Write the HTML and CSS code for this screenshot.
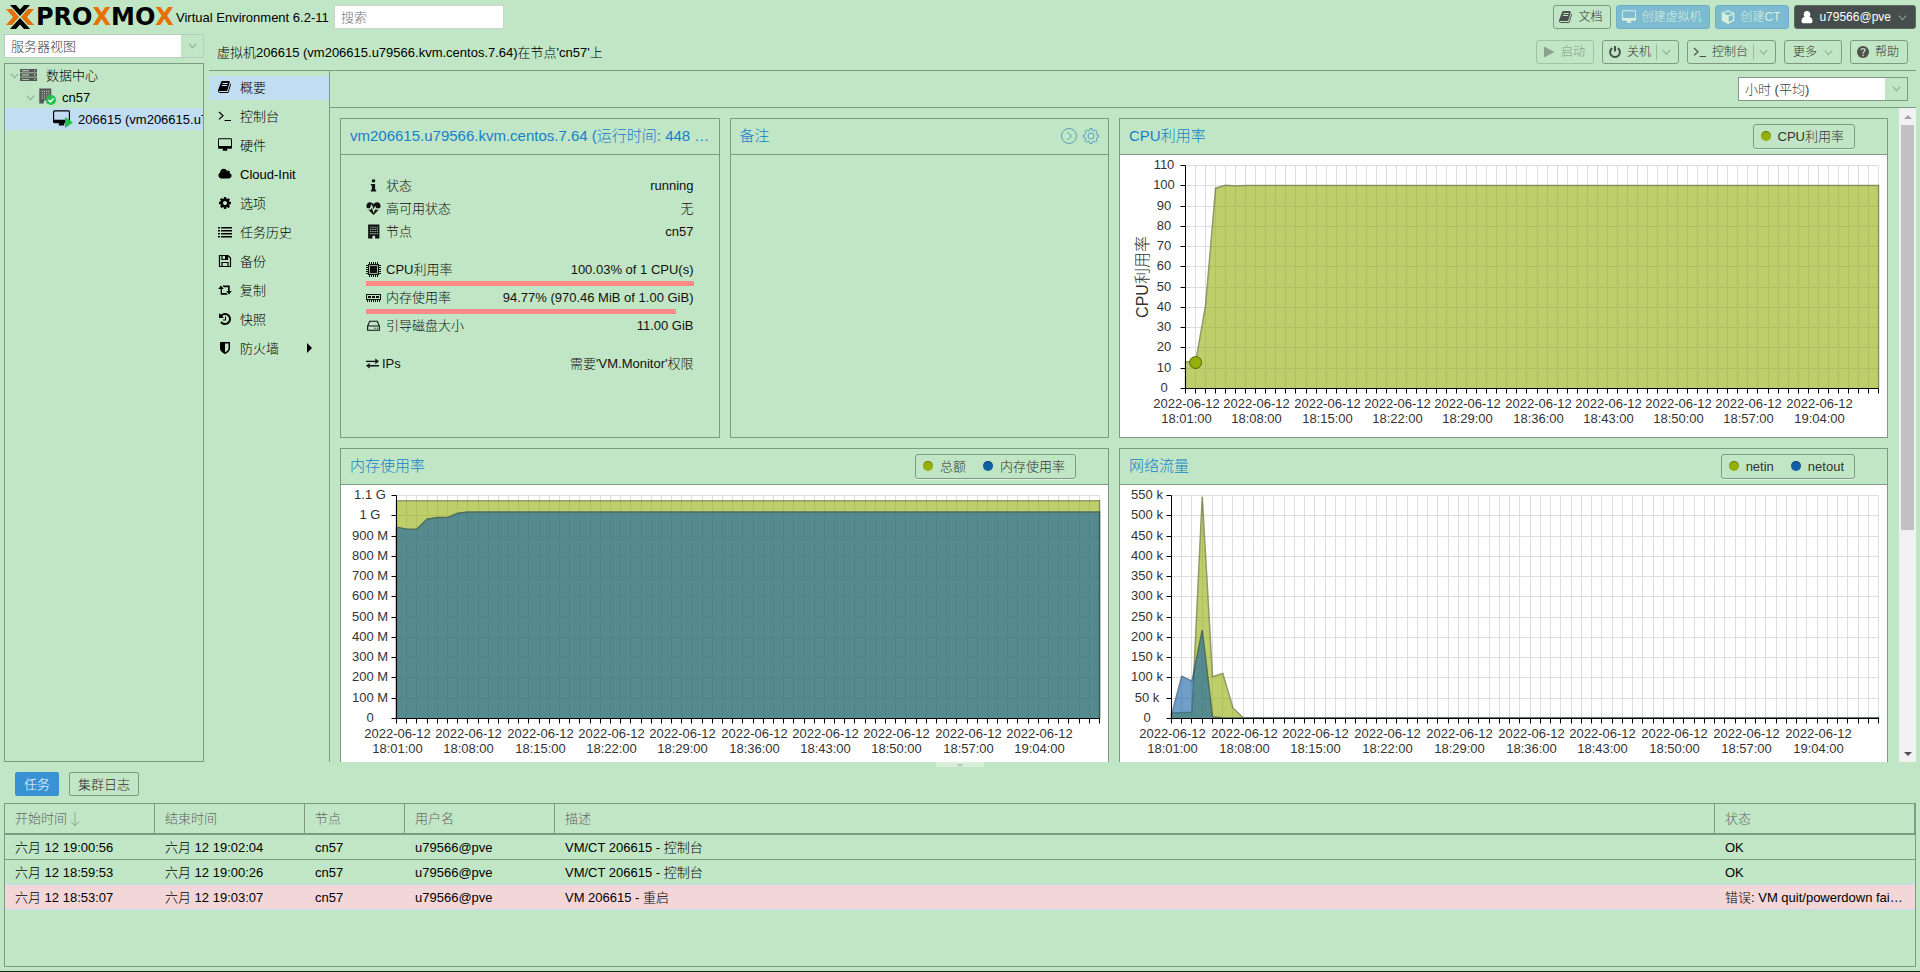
FILE: index.html
```html
<!DOCTYPE html>
<html lang="zh-CN">
<head>
  <meta charset="UTF-8">
  <meta name="viewport" content="width=device-width, initial-scale=1.0">
  <title>Proxmox Virtual Environment</title>
  <link rel="stylesheet" href="styles.css">
</head>
<body>
  <!-- Icon sprite -->
  <svg class="sprite" aria-hidden="true">
    <symbol id="i-book" viewBox="0 0 1792 1792"><path d="M1639 478q40 57 18 129l-275 906q-19 64-76.500 107.500t-122.500 43.500h-923q-77 0-148.500-53.500t-99.500-131.500q-24-67-2-127 0-4 3-27t4-37q1-8-3-21.500t-3-19.500q2-11 8-21t16.500-23.500 16.500-23.500q23-38 45-91.500t30-91.500q3-10 .5-30t-.5-28q3-11 17-28t17-23q21-36 42-92t25-90q1-9-2.500-32t.5-28q4-13 22-30.500t22-22.500q19-26 42.500-84.500t27.500-96.500q1-8-3-25.500t-2-26.500q2-8 9-18t18-23 17-21q8-12 16.500-30.500t15-35 16-36 19.500-32 26.500-23.500 36-11.500 47.500 5.500l-1 3q38-9 51-9h761q74 0 114 56t18 130l-274 906q-36 119-71.500 153.500t-128.500 34.500h-869q-27 0-38 15-11 16-1 43 24 70 144 70h923q29 0 56-15.500t35-41.500l300-987q7-22 5-57 38 15 59 43zm-1064 2q-4 13 2 22.500t20 9.500h608q13 0 25.500-9.500t16.500-22.500l21-64q4-13-2-22.500t-20-9.500h-608q-13 0-25.500 9.500t-16.500 22.500zm-83 256q-4 13 2 22.500t20 9.500h608q13 0 25.500-9.500t16.500-22.500l21-64q4-13-2-22.500t-20-9.500h-608q-13 0-25.500 9.500t-16.500 22.500z"/></symbol>
    <symbol id="i-desktop" viewBox="0 0 1856 1792"><path d="M1728 992v-832q0-13-9.500-22.500t-22.500-9.500h-1536q-13 0-22.500 9.500t-9.500 22.500v832q0 13 9.500 22.500t22.500 9.500h1536q13 0 22.500-9.500t9.500-22.500zm128-832v1088q0 66-47 113t-113 47h-512q0 37 16 77.500t32 71 16 43.500q0 26-19 45t-45 19h-512q-26 0-45-19t-19-45q0-14 16-44t32-70 16-78h-512q-66 0-113-47t-47-113v-1088q0-66 47-113t113-47h1536q66 0 113 47t47 113z"/></symbol>
    <symbol id="i-cube" viewBox="0 0 14 14"><path fill-rule="evenodd" d="M7 .3 13.300 2.800V10.700L7 13.900.7 10.700V2.800zM7 1.600 2.400 3.500 7 5.300 11.600 3.500zM7.700 12 12 9.800V4.800L7.700 6.500z"/></symbol>
    <symbol id="i-user" viewBox="0 0 14 14"><path d="M7 1c2 0 3.300 1.500 3.300 3.400 0 1-.4 2-1 2.700C11 7.200 12.500 8.600 12.500 11c0 1.500-.9 2.300-2.200 2.300H3.700C2.400 13.300 1.500 12.500 1.500 11c0-2.400 1.500-3.800 3.200-3.900-.6-.7-1-1.700-1-2.700C3.700 2.500 5 1 7 1z"/></symbol>
    <symbol id="i-play" viewBox="0 0 14 14"><path d="M2 1.500 12.500 7 2 12.500z"/></symbol>
    <symbol id="i-power" viewBox="0 0 14 14"><path class="line bold" d="M4.200 3.100a4.900 4.900 0 1 0 5.600 0M7 1v5.500"/></symbol>
    <symbol id="i-terminal" viewBox="0 0 14 14"><path class="line" d="M1 3l4 3.700-4 3.700M6.500 11.500H13"/></symbol>
    <symbol id="i-help" viewBox="0 0 14 14"><circle cx="7" cy="7" r="6"/><path class="hole" d="M5 5.300C5.200 3 9 3 9 5.300 9 6.800 7 6.600 7 8.400M7 9.600v1.600"/></symbol>
    <symbol id="i-cloud" viewBox="0 0 2048 1792"><path d="M1984 1152q0 159-112.500 271.500t-271.500 112.500h-1088q-185 0-316.500-131.500t-131.500-316.500q0-132 71-241.500t187-163.500q-2-28-2-43 0-212 150-362t362-150q158 0 286.500 88t187.500 230q70-62 166-62 106 0 181 75t75 181q0 75-41 138 129 30 213 134.500t84 239.500z"/></symbol>
    <symbol id="i-gear" viewBox="0 0 1792 1792"><path d="M1152 896q0-106-75-181t-181-75-181 75-75 181 75 181 181 75 181-75 75-181zm512-109v222q0 12-8 23t-20 13l-185 28q-19 54-39 91 35 50 107 138 10 12 10 25t-9 23q-27 37-99 108t-94 71q-12 0-26-9l-138-108q-44 23-91 38-16 136-29 186-7 28-36 28h-222q-14 0-24.500-8.500t-11.500-21.500l-28-184q-49-16-90-37l-141 107q-10 9-25 9-14 0-25-11-126-114-165-168-7-10-7-23 0-12 8-23 15-21 51-66.500t54-70.500q-27-50-41-99l-183-27q-13-2-21-12.500t-8-23.500v-222q0-12 8-23t19-13l186-28q14-46 39-92-40-57-107-138-10-12-10-24 0-10 9-23 26-36 98.500-107.500t94.500-71.500q13 0 26 10l138 107q44-23 91-38 16-136 29-186 7-28 36-28h222q14 0 24.500 8.500t11.500 21.500l28 184q49 16 90 37l142-107q9-9 24-9 13 0 25 10 129 119 165 170 7 8 7 22 0 12-8 23-15 21-51 66.500t-54 70.500q26 50 41 98l183 28q13 2 21 12.500t8 23.500z"/></symbol>
    <symbol id="i-list" viewBox="0 0 14 14"><path d="M0 2h2v1.500H0zM3 2h11v1.500H3zM0 5h2v1.500H0zM3 5h11v1.500H3zM0 8h2v1.500H0zM3 8h11v1.500H3zM0 11h2v1.500H0zM3 11h11v1.500H3z"/></symbol>
    <symbol id="i-floppy" viewBox="0 0 14 14"><path class="line" d="M1.500 1.500h8.500l2.500 2.500v8.500h-11zM4 1.500v4h5.500v-4M4 12.500v-4h6v4"/><path d="M7 2h2v3H7z"/></symbol>
    <symbol id="i-retweet" viewBox="0 0 14 14"><path d="M3 2.500 5.800 6H4v4h4.500l1.200 1.800H2.700V6H.2zM11 11.500 8.200 8H10V4.300H5.800L4.500 2.500h7.200V8h2.100z"/></symbol>
    <symbol id="i-history" viewBox="0 0 1792 1792"><path d="M1664 896q0 156-61 298t-164 245-245 164-298 61q-172 0-327-72.500t-264-204.500q-7-10-6.500-22.500t8.500-20.500l137-138q10-9 25-9 16 2 23 12 73 95 179 147t225 52q104 0 198.500-40.500t163.500-109.500 109.500-163.500 40.500-198.500-40.500-198.500-109.500-163.500-163.500-109.500-198.500-40.500q-98 0-188 35.500t-160 101.500l137 138q31 30 14 69-17 40-59 40h-448q-26 0-45-19t-19-45v-448q0-42 40-59 39-17 69 14l130 129q107-101 244.500-156.500t284.500-55.500q156 0 298 61t245 164 164 245 61 298zm-640-288v448q0 14-9 23t-23 9h-320q-14 0-23-9t-9-23v-64q0-14 9-23t23-9h224v-352q0-14 9-23t23-9h64q14 0 23 9t9 23z"/></symbol>
    <symbol id="i-shield" viewBox="0 0 1792 1792"><path d="M1344 960v-640h-448v1137q119-63 213-137 235-184 235-360zm192-768v768q0 86-33.500 170.500t-83 150-118 127.500-126.500 103-121 77.500-89.500 49.500-42.500 20q-12 6-26 6t-26-6q-16-7-42.500-20t-89.500-49.500-121-77.500-126.500-103-118-127.500-83-150-33.500-170.500v-768q0-26 19-45t45-19h1152q26 0 45 19t19 45z"/></symbol>
    <symbol id="i-info" viewBox="0 0 14 14"><path d="M5.500 1.500h3v2.500h-3zM4.500 5.500h4V11h1v1.500h-5V11h1V7h-1z"/></symbol>
    <symbol id="i-heart" viewBox="0 0 14 14"><path d="M7 13 1.500 7.500C-.8 4.800.8 1.200 3.700 1.200 5.500 1.200 6.400 2.200 7 3c.6-.8 1.500-1.800 3.300-1.800 2.900 0 4.500 3.600 2.200 6.300z"/><path class="hole" d="M0 7.500h4l1.200-3 2 5L8.500 6l.8 1.500H14"/></symbol>
    <symbol id="i-building" viewBox="0 0 14 14"><path fill-rule="evenodd" d="M2 .5h10.500v13H8.500v-2.500H6v2.500H2zM4 2.500v1h1v-1zM6 2.500v1h1v-1zM8 2.500v1h1v-1zM10 2.500v1h1v-1zM4 4.500v1h1v-1zM6 4.500v1h1v-1zM8 4.500v1h1v-1zM10 4.500v1h1v-1zM4 6.500v1h1v-1zM6 6.500v1h1v-1zM8 6.500v1h1v-1zM10 6.500v1h1v-1zM4 8.500v1h1v-1zM6 8.500v1h1v-1zM8 8.500v1h1v-1zM10 8.500v1h1v-1z"/></symbol>
    <symbol id="i-server" viewBox="0 0 17 14"><path fill-rule="evenodd" d="M0 1h17v3.500H0zM0 5.300h17v3.500H0zM0 9.600h17v3.500H0zM2 2.300v.9h7v-.9zM14 2.300v.9h1.500v-.9zM2 6.600v.9h7v-.9zM14 6.600v.9h1.500v-.9zM2 10.900v.9h7v-.9zM14 10.900v.9h1.500v-.9z"/></symbol>
    <symbol id="i-cpu" viewBox="0 0 15 15"><path fill-rule="evenodd" d="M2 2h11v11H2zM3.200 3.200v8.600h8.600V3.200z"/><path d="M4 4h7v7H4zM3 0h1v2H3zM5 0h1v2H5zM7 0h1v2H7zM9 0h1v2H9zM11 0h1v2h-1zM3 13h1v2H3zM5 13h1v2H5zM7 13h1v2H7zM9 13h1v2H9zM11 13h1v2h-1zM0 3h2v1H0zM0 5h2v1H0zM0 7h2v1H0zM0 9h2v1H0zM0 11h2v1H0zM13 3h2v1h-2zM13 5h2v1h-2zM13 7h2v1h-2zM13 9h2v1h-2zM13 11h2v1h-2z"/></symbol>
    <symbol id="i-memory" viewBox="0 0 15 15"><path fill-rule="evenodd" d="M0 4h15v6H0zM1 5v4h13V5z"/><path d="M2 6h3v2H2zM6 6h3v2H6zM10 6h3v2h-3zM1 10h1v2H1zM3 10h1v2H3zM5 10h1v2H5zM7 10h1v2H7zM9 10h1v2H9zM11 10h1v2h-1zM13 10h1v2h-1z"/></symbol>
    <symbol id="i-hdd" viewBox="0 0 14 14"><path class="line thin" d="M1.500 7.500 3.500 3h7l2 4.500v4h-11zM1.500 7.500h11M8 9.500h1M10 9.500h1"/></symbol>
    <symbol id="i-exchange" viewBox="0 0 14 14"><path d="M0 4h10V1.500L14 4.700l-4 3V5.400H0zM14 8.700H4V6.400L0 9.500l4 3v-2.400h10z"/></symbol>
    <symbol id="i-chevron" viewBox="0 0 10 10"><path class="line" d="M1 3l4 4.500L9 3"/></symbol>
  </svg>

  <!-- Header -->
  <header class="topbar">
    <div class="logo">
      <svg class="logo-mark" viewBox="0 0 30 26" aria-hidden="true">
        <path class="logo-orange" d="M1 5h6l7 8-7 8H1l7-8zM29 5h-6l-7 8 7 8h6l-7-8z"/>
        <path d="M5 1h6l4 4.500L19 1h6L15 12zM5 25h6l4-4.500 4 4.500h6L15 14z"/>
      </svg>
      <span class="logo-text">PRO<b>X</b>MO<b>X</b></span>
    </div>
    <span class="version">Virtual Environment 6.2-11</span>
    <input class="search" type="text" placeholder="搜索" aria-label="搜索">
    <div class="buttons">
      <button class="btn"><svg class="icon"><use href="#i-book"/></svg>文档</button>
      <button class="btn btn-create" disabled><svg class="icon"><use href="#i-desktop"/></svg>创建虚拟机</button>
      <button class="btn btn-create" disabled><svg class="icon"><use href="#i-cube"/></svg>创建CT</button>
      <button class="btn btn-user"><svg class="icon"><use href="#i-user"/></svg>u79566@pve<svg class="chevron"><use href="#i-chevron"/></svg></button>
    </div>
  </header>

  <main class="workspace">
    <!-- Resource tree -->
    <aside class="sidebar">
      <div class="combo view-combo">
        <select aria-label="视图"><option>服务器视图</option></select>
        <svg class="chevron"><use href="#i-chevron"/></svg>
      </div>
      <ul class="tree">
        <li class="level-0"><svg class="chevron"><use href="#i-chevron"/></svg><svg class="icon grey server"><use href="#i-server"/></svg><span>数据中心</span></li>
        <li class="level-1"><svg class="chevron"><use href="#i-chevron"/></svg>
          <svg class="tree-icon" viewBox="0 0 20 20"><use class="grey" href="#i-building" width="16" height="18"/><circle class="green" cx="14" cy="13" r="5"/><path class="tick" d="M11.500 13l2 2 3-3.500"/></svg><span>cn57</span></li>
        <li class="level-2 selected">
          <svg class="tree-icon" viewBox="0 0 20 20"><use href="#i-desktop" y="1" width="17" height="17"/><path class="green" d="M12 8l8 5.500-8 5.500z"/></svg><span class="node-text">206615 (vm206615.u79566.kvm.centos.7.64)</span></li>
      </ul>
    </aside>

    <section class="content">
      <div class="titlebar">
        <h1>虚拟机206615 (vm206615.u79566.kvm.centos.7.64)在节点'cn57'上</h1>
        <div class="buttons">
          <button class="btn" disabled><svg class="icon"><use href="#i-play"/></svg>启动</button>
          <button class="btn btn-split"><svg class="icon"><use href="#i-power"/></svg>关机<svg class="chevron"><use href="#i-chevron"/></svg></button>
          <button class="btn btn-split"><svg class="icon"><use href="#i-terminal"/></svg>控制台<svg class="chevron"><use href="#i-chevron"/></svg></button>
          <button class="btn btn-menu">更多<svg class="chevron"><use href="#i-chevron"/></svg></button>
          <button class="btn"><svg class="icon"><use href="#i-help"/></svg>帮助</button>
        </div>
      </div>

      <div class="vm">
        <nav class="menu">
          <a href="#" class="selected"><svg class="icon"><use href="#i-book"/></svg>概要</a>
          <a href="#"><svg class="icon"><use href="#i-terminal"/></svg>控制台</a>
          <a href="#"><svg class="icon"><use href="#i-desktop"/></svg>硬件</a>
          <a href="#"><svg class="icon"><use href="#i-cloud"/></svg>Cloud-Init</a>
          <a href="#"><svg class="icon"><use href="#i-gear"/></svg>选项</a>
          <a href="#"><svg class="icon"><use href="#i-list"/></svg>任务历史</a>
          <a href="#"><svg class="icon"><use href="#i-floppy"/></svg>备份</a>
          <a href="#"><svg class="icon"><use href="#i-retweet"/></svg>复制</a>
          <a href="#"><svg class="icon"><use href="#i-history"/></svg>快照</a>
          <a href="#"><svg class="icon"><use href="#i-shield"/></svg>防火墙<i class="expand"></i></a>
        </nav>

        <div class="summary">
          <div class="summary-bar">
            <div class="combo time-combo">
              <select aria-label="时间范围"><option>小时 (平均)</option></select>
              <svg class="chevron"><use href="#i-chevron"/></svg>
            </div>
          </div>

          <div class="scroller">
            <div class="panels">
              <!-- Status -->
              <section class="panel">
                <header><h2>vm206615.u79566.kvm.centos.7.64 (运行时间: 448 天 02:17:36)</h2></header>
                <div class="status">
                  <div class="row"><svg class="icon"><use href="#i-info"/></svg>状态<span>running</span></div>
                  <div class="row"><svg class="icon"><use href="#i-heart"/></svg>高可用状态<span>无</span></div>
                  <div class="row"><svg class="icon"><use href="#i-building"/></svg>节点<span>cn57</span></div>
                  <div class="row space"><svg class="icon"><use href="#i-cpu"/></svg>CPU利用率<span>100.03% of 1 CPU(s)</span></div>
                  <div class="meter"><div style="width: 100%"></div></div>
                  <div class="row"><svg class="icon"><use href="#i-memory"/></svg>内存使用率<span>94.77% (970.46 MiB of 1.00 GiB)</span></div>
                  <div class="meter"><div style="width: 94.77%"></div></div>
                  <div class="row"><svg class="icon"><use href="#i-hdd"/></svg>引导磁盘大小<span>11.00 GiB</span></div>
                  <div class="row space ips"><svg class="icon"><use href="#i-exchange"/></svg>IPs<span>需要'VM.Monitor'权限</span></div>
                </div>
              </section>

              <!-- Notes -->
              <section class="panel">
                <header>
                  <h2>备注</h2>
                  <button class="tool" aria-label="展开"><svg viewBox="0 0 16 16"><circle cx="8" cy="8" r="7.500"/><path d="M6.500 4l4 4-4 4"/></svg></button>
                  <button class="tool" aria-label="编辑"><svg viewBox="0 0 16 16"><circle cx="8" cy="8" r="3"/><path d="M6.800.6h2.400l.4 1.900 1.400.6 1.600-1.100 1.600 1.600-1.100 1.600.6 1.400 1.800.4v2.200l-1.800.4-.6 1.400 1.100 1.600-1.600 1.600-1.600-1.100-1.400.6-.4 1.800H6.800l-.4-1.800-1.400-.6-1.600 1.100-1.600-1.600 1.100-1.600-.6-1.400L.5 9.200V7l1.800-.4.6-1.400-1.100-1.600L3.400 2 5 3.100l1.400-.6z"/></svg></button>
                </header>
              </section>

              <!-- CPU chart -->
              <section class="panel wide">
                <header>
                  <h2>CPU利用率</h2>
                  <div class="legend"><span class="green-dot">CPU利用率</span></div>
                </header>
                <div class="chart" id="chart-cpu"></div>
              </section>

              <!-- Memory chart -->
              <section class="panel wide">
                <header>
                  <h2>内存使用率</h2>
                  <div class="legend"><span class="green-dot">总额</span><span class="blue-dot">内存使用率</span></div>
                </header>
                <div class="chart" id="chart-mem"></div>
              </section>

              <!-- Network chart -->
              <section class="panel wide">
                <header>
                  <h2>网络流量</h2>
                  <div class="legend"><span class="green-dot">netin</span><span class="blue-dot">netout</span></div>
                </header>
                <div class="chart" id="chart-net"></div>
              </section>
            </div>
            <div class="scrollbar"><i class="up"></i><div class="thumb"></div><i class="down"></i></div>
          </div>
        </div>
      </div>
    </section>
  </main>

  <!-- Task log -->
  <footer class="log">
    <div class="splitter"><i></i></div>
    <div class="tabs">
      <button class="tab active">任务</button>
      <button class="tab">集群日志</button>
    </div>
    <div class="grid">
      <table>
        <colgroup><col class="c-time"><col class="c-time"><col class="c-node"><col class="c-time"><col><col class="c-state"></colgroup>
        <thead>
          <tr><th>开始时间<svg class="sort" viewBox="0 0 10 16"><path d="M5 1v14M1 10.500l4 4.500 4-4.500"/></svg></th><th>结束时间</th><th>节点</th><th>用户名</th><th>描述</th><th>状态</th></tr>
        </thead>
        <tbody>
          <tr><td>六月 12 19:00:56</td><td>六月 12 19:02:04</td><td>cn57</td><td>u79566@pve</td><td>VM/CT 206615 - 控制台</td><td>OK</td></tr>
          <tr><td>六月 12 18:59:53</td><td>六月 12 19:00:26</td><td>cn57</td><td>u79566@pve</td><td>VM/CT 206615 - 控制台</td><td>OK</td></tr>
          <tr class="error"><td>六月 12 18:53:07</td><td>六月 12 19:03:07</td><td>cn57</td><td>u79566@pve</td><td>VM 206615 - 重启</td><td>错误: VM quit/powerdown failed</td></tr>
        </tbody>
      </table>
    </div>
  </footer>
  <script src="charts.js"></script>
</body>
</html>
```
FILE: styles.css
```css
:root {
  --bg: #c1e6c5;
  --line: #7f9a83;
  --selected: #c1ddf1;
  --blue: #157fcc;
}

* {
  box-sizing: border-box;
}

body {
  margin: 0;
  height: 100vh;
  display: flex;
  flex-direction: column;
  background: var(--bg);
  border-bottom: 1px solid #0c2a10;
  font: 300 13px/17px "Liberation Sans", "Noto Sans CJK SC Light", "Noto Sans CJK SC", sans-serif;
  color: #000;
  overflow: hidden;
}

button,
input,
select {
  font: inherit;
  color: inherit;
}

h1,
h2,
ul {
  margin: 0;
  padding: 0;
  font-weight: 300;
}

/* Icons */
.sprite {
  position: absolute;
  width: 0;
  height: 0;
}

.icon {
  width: 14px;
  height: 14px;
  flex: none;
  fill: currentColor;
  stroke: none;
}

.line {
  fill: none;
  stroke: currentColor;
  stroke-width: 1.2;
}

.thin {
  stroke-width: 1;
}

.bold {
  stroke-width: 2;
}

.hole {
  fill: none;
  stroke: var(--bg);
  stroke-width: 1.3;
}

.chevron {
  width: 9px;
  height: 9px;
  flex: none;
  color: #8fa893;
}

.grey {
  color: #555;
  fill: #555;
}

.green {
  fill: #21bf4b;
}

.tick {
  fill: none;
  stroke: #fff;
  stroke-width: 1.5;
}

/* Header */
.topbar {
  display: flex;
  align-items: center;
  height: 34px;
  padding: 0 4px 0 5px;
}

.logo {
  display: flex;
  align-items: center;
  gap: 1px;
  width: 171px;
}

.logo-mark {
  width: 30px;
  height: 26px;
  flex: none;
}

.logo-orange {
  fill: #e57000;
}

.logo-text {
  font: bold 24px/26px "DejaVu Sans", sans-serif;
}

.logo-text b {
  color: #e57000;
}

.version {
  width: 158px;
}

.search {
  width: 170px;
  height: 24px;
  padding: 0 6px;
  border: 1px solid #cfcfcf;
  background: #fff;
}

.search::placeholder {
  color: #777;
}

.buttons {
  display: flex;
  gap: 5px;
  margin-left: auto;
}

.btn {
  display: flex;
  align-items: center;
  gap: 5px;
  height: 24px;
  padding: 0 8px 0 5px;
  border: 1px solid var(--line);
  border-radius: 3px;
  background: transparent;
  font-size: 12px;
  color: #333;
  white-space: nowrap;
}

.btn .icon {
  color: #4c4f4d;
}

.btn .chevron {
  margin-left: 2px;
}

.btn:disabled {
  opacity: 0.45;
}

.btn-create,
.btn-create:disabled {
  background: #7cbbd0;
  border-color: #6fafc8;
  color: #d8efdf;
  opacity: 1;
}

.btn-user {
  background: #464d4d;
  border-color: #5f6a66;
  color: #fff;
}

.btn-create .icon,
.btn-user .icon {
  color: inherit;
}

.btn-menu {
  padding-left: 8px;
}

.btn-split .chevron {
  width: 15px;
  height: 16px;
  margin: 0 -1px 0 0;
  padding: 3px 0 3px 5px;
  border-left: 1px solid #9fb9a3;
}

/* Workspace */
.workspace {
  flex: 1;
  min-height: 0;
  display: flex;
  gap: 5px;
  padding: 0 4px;
}

.sidebar {
  width: 200px;
  flex: none;
  display: flex;
  flex-direction: column;
  gap: 5px;
}

.combo {
  position: relative;
  height: 24px;
}

.combo select {
  width: 100%;
  height: 100%;
  padding: 0 6px;
  border: 1px solid #bcccbe;
  border-radius: 0;
  appearance: none;
  background: linear-gradient(to left, var(--bg) 22px, #fff 22px);
  color: #404040;
}

.combo .chevron {
  position: absolute;
  right: 7px;
  top: 7px;
}

.tree {
  flex: 1;
  border: 1px solid var(--line);
  list-style: none;
  overflow: hidden;
}

.tree li {
  display: flex;
  align-items: center;
  height: 22px;
  white-space: nowrap;
}

.tree .server {
  width: 17px;
  margin-right: 9px;
}

.tree-icon {
  width: 20px;
  height: 20px;
  flex: none;
  margin-right: 5px;
}

.node-text {
  min-width: 0;
  overflow: hidden;
}

.level-0 {
  padding-left: 5px;
}

.level-0 .chevron {
  margin-right: 1px;
}

.level-1 {
  padding-left: 21px;
}

.level-1 .chevron {
  margin-right: 2px;
}

.level-2 {
  padding-left: 48px;
}

.selected {
  background: var(--selected);
}

.content {
  flex: 1;
  min-width: 0;
  display: flex;
  flex-direction: column;
}

.titlebar {
  display: flex;
  align-items: center;
  height: 36px;
  padding: 0 8px;
}

.titlebar .buttons {
  gap: 8px;
}

h1 {
  font-size: 13px;
}

.vm {
  flex: 1;
  min-height: 0;
  display: flex;
  border-top: 1px solid var(--line);
}

.menu {
  width: 121px;
  flex: none;
  display: flex;
  flex-direction: column;
  gap: 5px;
  padding-top: 5px;
  border-right: 1px solid var(--line);
}

.menu a {
  display: flex;
  align-items: center;
  gap: 8px;
  height: 24px;
  padding: 0 17px 2px 9px;
  color: #000;
  text-decoration: none;
}

.expand {
  margin-left: auto;
  border: 5px solid transparent;
  border-left-color: #000;
  border-right: 0;
}

.summary {
  flex: 1;
  min-width: 0;
  display: flex;
  flex-direction: column;
}

.summary-bar {
  display: flex;
  justify-content: flex-end;
  height: 37px;
  padding: 6px 8px;
  border-bottom: 1px solid var(--line);
}

.time-combo {
  width: 170px;
}

.time-combo select {
  border-color: var(--line);
}

.scroller {
  flex: 1;
  min-height: 0;
  display: flex;
  overflow: hidden;
}

.panels {
  flex: 1;
  min-width: 0;
  display: grid;
  grid-template-columns: repeat(4, minmax(0, 1fr));
  grid-auto-rows: 320px;
  gap: 10px;
  padding: 10px 11px 10px 10px;
}

/* Panels */
.panel {
  display: flex;
  flex-direction: column;
  border: 1px solid var(--line);
}

.wide {
  grid-column: span 2;
}

.panel header {
  display: flex;
  align-items: center;
  gap: 6px;
  height: 36px;
  padding: 0 9px 1px;
  border-bottom: 1px solid var(--line);
}

.panel h2 {
  flex: 1;
  font-size: 15px;
  line-height: 20px;
  color: var(--blue);
  white-space: nowrap;
  overflow: hidden;
  text-overflow: ellipsis;
}

.tool {
  width: 16px;
  height: 16px;
  padding: 0;
  border: 0;
  background: none;
}

.tool svg {
  display: block;
  fill: none;
  stroke: #5a9fc0;
}

.legend {
  display: flex;
  align-items: center;
  gap: 17px;
  height: 25px;
  margin-right: 23px;
  padding: 0 10px 0 7px;
  border: 1px solid var(--line);
  border-radius: 3px;
  box-shadow: 0 1px #dcf2de;
  color: #333;
}

.legend span {
  display: flex;
  align-items: center;
  gap: 7px;
}

.legend span::before {
  content: "";
  width: 10px;
  height: 10px;
  border-radius: 50%;
  box-shadow: inset 0 1px rgba(0, 0, 0, 0.3);
}

.green-dot::before {
  background: #94ae0a;
}

.blue-dot::before {
  background: #115fa6;
}

/* Status list */
.status {
  padding: 19px 25px;
  color: #111;
}

.row {
  display: flex;
  align-items: center;
  gap: 5px;
  height: 23px;
}

.row .icon {
  width: 15px;
  height: 15px;
}

.row span {
  margin-left: auto;
}

.space {
  margin-top: 15px;
}

.ips {
  gap: 3px;
}

.ips .icon {
  width: 13px;
}

.meter {
  height: 5px;
}

.meter div {
  height: 5px;
  background: #ff8a88;
}

/* Charts */
.chart {
  flex: 1;
  background: #fff;
  overflow: hidden;
}

.chart svg {
  display: block;
}

.chart text {
  font-size: 13px;
  text-anchor: middle;
  fill: #333;
}

.chart .axis-title {
  font-size: 16px;
}

.gridline {
  stroke: #ddd;
}

.axis {
  stroke: #000;
  fill: none;
}

.series-green {
  fill: #94ae0a;
  stroke: #4a5805;
  stroke-width: 1.5;
  opacity: 0.6;
}

.series-blue {
  fill: #115fa6;
  stroke: #083053;
  stroke-width: 1.5;
  opacity: 0.6;
}

.marker {
  fill: #94ae0a;
  stroke: #566606;
}

/* Scrollbar */
.scrollbar {
  width: 17px;
  display: flex;
  flex-direction: column;
  align-items: center;
  background: #f1f1f1;
}

.scrollbar i {
  margin: 7px 0 6px;
  border: 4px solid transparent;
}

.scrollbar .up {
  border-top: 0;
  border-bottom-color: #a3a3a3;
}

.scrollbar .down {
  margin-top: auto;
  border-bottom: 0;
  border-top-color: #505050;
}

.thumb {
  width: 13px;
  height: 62%;
  background: #c1c1c1;
}

/* Task log */
.log {
  height: 209px;
  flex: none;
  display: flex;
  flex-direction: column;
  padding: 0 4px 4px;
}

.splitter {
  display: flex;
  justify-content: center;
  height: 10px;
}

.splitter i {
  width: 48px;
  height: 5px;
  background: #d9efdb;
}

.splitter i::before {
  content: "";
  display: block;
  width: 0;
  margin: 2px auto 0;
  border: 4px solid transparent;
  border-top: 3px solid #b0d0b4;
  border-bottom: 0;
}

.tabs {
  display: flex;
  gap: 10px;
  padding: 0 11px 7px;
}

.tab {
  height: 24px;
  padding: 0 8px;
  border: 1px solid var(--line);
  border-radius: 2px;
  background: transparent;
  color: #333;
}

.tab.active {
  border-color: #3892d4;
  background: #3892d4;
  color: #fff;
}

.grid {
  flex: 1;
  border: 1px solid var(--line);
}

table {
  width: 100%;
  table-layout: fixed;
  border-spacing: 0;
}

.c-time {
  width: 150px;
}

.c-node {
  width: 100px;
}

.c-state {
  width: 200px;
}

th {
  height: 31px;
  padding: 0 10px;
  border-right: 1px solid var(--line);
  border-bottom: 2px solid var(--line);
  font-weight: 300;
  color: #666;
  text-align: left;
}

td {
  height: 25px;
  padding: 0 12px 0 10px;
  border-bottom: 1px solid var(--line);
  white-space: nowrap;
  overflow: hidden;
  text-overflow: ellipsis;
}

.sort {
  width: 10px;
  height: 16px;
  margin-left: 3px;
  vertical-align: middle;
  fill: none;
  stroke: #8fa893;
}

.error td {
  background: #f3d6d7;
}

tr:has(+ .error) td,
.error td {
  border-bottom-color: #c5dcf2;
}
```
FILE: charts.js
```js
// samples are one minute apart, 18:01 to 19:10
var MINUTES = 69;
var TOP = 10;
var PLOT_HEIGHT = 223;

// repeat the last value until the end of the hour
function fill(values) {
  var out = values.slice();
  while (out.length <= MINUTES) out.push(values[values.length - 1]);
  return out;
}

var charts = [
  {
    id: 'chart-cpu', left: 65, labelX: 44, max: 110, title: 'CPU利用率', marker: 1,
    labels: ['0', '10', '20', '30', '40', '50', '60', '70', '80', '90', '100', '110'],
    series: [{ name: 'green', data: fill([13.3, 12.8, 41, 98.8, 100.2, 99.9, 100.1]) }]
  },
  {
    id: 'chart-mem', left: 55, labelX: 29, max: 1.1,
    labels: ['0', '100 M', '200 M', '300 M', '400 M', '500 M', '600 M', '700 M', '800 M', '900 M', '1 G', '1.1 G'],
    series: [
      { name: 'green', data: fill([1.074]) },
      { name: 'blue', data: fill([0.944, 0.934, 0.935, 0.983, 0.991, 0.991, 1.013, 1.018]) }
    ]
  },
  {
    id: 'chart-net', left: 51, labelX: 27, max: 550,
    labels: ['0', '50 k', '100 k', '150 k', '200 k', '250 k', '300 k', '350 k', '400 k', '450 k', '500 k', '550 k'],
    series: [
      { name: 'green', data: fill([13, 15, 15, 547, 103, 111, 26, 1]) },
      { name: 'blue', data: fill([9, 104, 92, 218, 4, 2, 1]) }
    ]
  }
];

function clock(minute) {
  var total = 18 * 60 + 1 + minute;
  var m = total % 60;
  return Math.floor(total / 60) + ':' + (m < 10 ? '0' + m : m) + ':00';
}

function drawChart(chart) {
  var box = document.getElementById(chart.id);
  var width = box.clientWidth;
  var left = chart.left + 0.5;
  var right = width - 8.5;
  var top = TOP + 0.5;
  var bottom = top + PLOT_HEIGHT;
  var snap = function (v) { return Math.floor(v) + 0.5; };
  var x = function (i) { return left + (right - left) * i / MINUTES; };
  var y = function (v) { return bottom - PLOT_HEIGHT * v / chart.max; };
  var grid = '', ticks = '', texts = '', areas = '';

  for (var i = 0; i <= MINUTES; i++) {
    var gx = snap(x(i));
    grid += 'M' + gx + ' ' + top + 'V' + bottom;
    ticks += 'M' + gx + ' ' + bottom + 'v5';
    if (i % 7 === 0 && i < 64) {
      texts += '<text x="' + (gx + 1) + '" y="' + (bottom + 19) + '">2022-06-12</text>';
      texts += '<text x="' + (gx + 1) + '" y="' + (bottom + 34) + '">' + clock(i) + '</text>';
    }
  }

  chart.labels.forEach(function (label, n) {
    var gy = snap(bottom - PLOT_HEIGHT * n / (chart.labels.length - 1));
    grid += 'M' + left + ' ' + gy + 'H' + right;
    ticks += 'M' + (left - 5) + ' ' + gy + 'H' + left;
    texts += '<text x="' + chart.labelX + '" y="' + (gy + 3) + '">' + label + '</text>';
  });

  chart.series.forEach(function (s) {
    var points = s.data.map(function (v, n) { return x(n) + ' ' + y(v); });
    areas += '<path class="series-' + s.name + '" d="M' + left + ' ' + bottom + 'L' + points.join('L') + 'L' + right + ' ' + bottom + '"/>';
  });

  if (chart.marker) {
    areas += '<circle class="marker" r="6" cx="' + x(chart.marker) + '" cy="' + y(chart.series[0].data[chart.marker]) + '"/>';
  }
  if (chart.title) {
    texts += '<text class="axis-title" transform="translate(28 122) rotate(-90)">' + chart.title + '</text>';
  }

  box.innerHTML = '<svg width="' + width + '" height="282">' +
    '<path class="gridline" d="' + grid + '"/>' + areas +
    '<path class="axis" d="' + ticks + 'M' + left + ' ' + top + 'V' + bottom + 'H' + right + '"/>' +
    texts + '</svg>';
}

function drawAll() {
  charts.forEach(drawChart);
}

drawAll();
window.addEventListener('resize', drawAll);
```
